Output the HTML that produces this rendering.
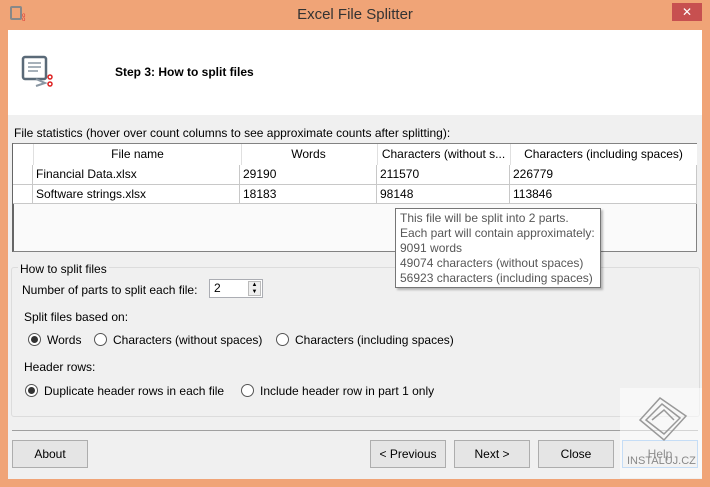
<!DOCTYPE html>
<html><head><style>
body{margin:0;width:710px;height:487px;background:#f0a477;font-family:"Liberation Sans",sans-serif;font-size:12px;color:#000;position:relative;overflow:hidden}
.a{position:absolute}
.btn{position:absolute;top:440px;height:26px;border:1px solid #adadad;background:#e5e5e5;text-align:center;line-height:26px;font-size:12px}
.radio{position:absolute;width:11px;height:11px;border:1px solid #555;border-radius:50%;background:#fff}
.radio.on::after{content:"";position:absolute;left:2px;top:2px;width:7px;height:7px;border-radius:50%;background:#333}
.cell{position:absolute;height:19px;line-height:19px;border-right:1px solid #c8c8c8;border-bottom:1px solid #c8c8c8;padding-left:3px;box-sizing:border-box}
</style></head><body>
<div class="a" style="left:10px;top:6px;width:12px;height:14px;border:2px solid #888;border-radius:2px;box-sizing:border-box"></div>
<div class="a" style="left:22px;top:14px;width:4px;height:8px;color:#d33;font-size:6px;line-height:4px">o<br>o</div>
<div class="a" style="left:0;top:6px;width:710px;text-align:center;font-size:15px;color:#333">Excel File Splitter</div>
<div class="a" style="left:672px;top:3px;width:30px;height:18px;background:#c75050;color:#fff;text-align:center;font-size:12px;line-height:18px">✕</div>
<div class="a" style="left:8px;top:30px;width:694px;height:449px;background:#f0f0f0"></div>
<div class="a" style="left:8px;top:30px;width:694px;height:85px;background:#fff"></div>
<svg class="a" style="left:20px;top:55px" width="36" height="34"><rect x="3" y="2" width="23" height="22" rx="2" fill="#fff" stroke="#5a6a78" stroke-width="2.5"/><path d="M8 8h13M8 12h13M8 16h10" stroke="#8a97a3" stroke-width="1.5"/><path d="M16 24l9 4-9 3" stroke="#8a97a3" stroke-width="2" fill="none"/><circle cx="30" cy="22" r="2" fill="none" stroke="#d22" stroke-width="1.5"/><circle cx="30" cy="29" r="2" fill="none" stroke="#d22" stroke-width="1.5"/></svg>
<div class="a" style="left:115px;top:65px;font-weight:bold;font-size:12px">Step 3: How to split files</div>
<div class="a" style="left:14px;top:126px">File statistics (hover over count columns to see approximate counts after splitting):</div>
<div class="a" style="left:12px;top:143px;width:685px;height:109px;border:1px solid #828282;border-left:2px solid #666;background:#fafafa;box-sizing:border-box"></div>
<div class="a" style="left:13px;top:144px;width:684px;height:21px;background:#fff;border-bottom:1px solid #c8c8c8"></div>
<div class="a" style="left:33px;top:144px;width:207px;height:21px;line-height:21px;text-align:center;border-left:1px solid #e0e0e0;border-right:1px solid #e0e0e0">File name</div>
<div class="a" style="left:240px;top:144px;width:137px;height:21px;line-height:21px;text-align:center;border-right:1px solid #e0e0e0">Words</div>
<div class="a" style="left:377px;top:144px;width:133px;height:21px;line-height:21px;text-align:center;border-right:1px solid #e0e0e0">Characters (without s...</div>
<div class="a" style="left:510px;top:144px;width:187px;height:21px;line-height:21px;text-align:center">Characters (including spaces)</div>
<div class="cell" style="left:13px;top:165px;width:20px;height:20px;background:#fff"></div>
<div class="cell" style="left:33px;top:165px;width:207px;height:20px;background:#fff">Financial Data.xlsx</div>
<div class="cell" style="left:240px;top:165px;width:137px;height:20px;background:#fff">29190</div>
<div class="cell" style="left:377px;top:165px;width:133px;height:20px;background:#fff">211570</div>
<div class="cell" style="left:510px;top:165px;width:187px;height:20px;background:#fff">226779</div>
<div class="cell" style="left:13px;top:185px;width:20px;background:#fff"></div>
<div class="cell" style="left:33px;top:185px;width:207px;background:#fff">Software strings.xlsx</div>
<div class="cell" style="left:240px;top:185px;width:137px;background:#fff">18183</div>
<div class="cell" style="left:377px;top:185px;width:133px;background:#fff">98148</div>
<div class="cell" style="left:510px;top:185px;width:187px;background:#fff">113846</div>
<div class="a" style="left:11px;top:267px;width:687px;height:148px;border:1px solid #dcdcdc;border-radius:3px"></div>
<div class="a" style="left:18px;top:262px;background:#f0f0f0;padding:0 2px">How to split files</div>
<div class="a" style="left:22px;top:283px">Number of parts to split each file:</div>
<div class="a" style="left:209px;top:279px;width:54px;height:19px;border:1px solid #abadb3;background:#fff;box-sizing:border-box;padding-left:4px;line-height:17px">2</div>
<div class="a" style="left:248px;top:281px;width:13px;height:15px;border:1px solid #bbb;background:#eee;font-size:6px;line-height:7px;text-align:center;box-sizing:border-box">▲<br>▼</div>
<div class="a" style="left:24px;top:310px">Split files based on:</div>
<div class="radio on" style="left:28px;top:333px"></div><div class="a" style="left:47px;top:333px">Words</div>
<div class="radio" style="left:94px;top:333px"></div><div class="a" style="left:113px;top:333px">Characters (without spaces)</div>
<div class="radio" style="left:276px;top:333px"></div><div class="a" style="left:295px;top:333px">Characters (including spaces)</div>
<div class="a" style="left:24px;top:360px">Header rows:</div>
<div class="radio on" style="left:25px;top:384px"></div><div class="a" style="left:44px;top:384px">Duplicate header rows in each file</div>
<div class="radio" style="left:241px;top:384px"></div><div class="a" style="left:260px;top:384px">Include header row in part 1 only</div>
<div class="a" style="left:12px;top:430px;width:686px;height:1px;background:#a0a0a0"></div>
<div class="btn" style="left:12px;width:74px">About</div>
<div class="btn" style="left:370px;width:74px">&lt; Previous</div>
<div class="btn" style="left:454px;width:74px">Next &gt;</div>
<div class="btn" style="left:538px;width:74px">Close</div>
<div class="btn" style="left:622px;width:74px;border-color:#7eb4ea">Help</div>
<div class="a" style="left:620px;top:388px;width:82px;height:90px;background:rgba(255,255,255,0.55)"></div>
<svg class="a" style="left:630px;top:390px" width="64" height="62"><path d="M10 30L30 8 56 26 34 50Z M16 30L32 14 50 28 34 44Z M22 30L34 20 44 30" fill="none" stroke="#999" stroke-width="1.5"/></svg>
<div class="a" style="left:627px;top:455px;color:#888;font-size:11px">INSTALUJ.CZ</div>
<div class="a" style="left:395px;top:208px;width:206px;height:80px;border:1px solid #767676;background:#fff;box-shadow:2px 2px 2px rgba(0,0,0,0.25);box-sizing:border-box;padding:2px 4px;font-size:12px;line-height:15px;color:#575757;white-space:nowrap">This file will be split into 2 parts.<br>Each part will contain approximately:<br>9091 words<br>49074 characters (without spaces)<br>56923 characters (including spaces)</div>
</body></html>
